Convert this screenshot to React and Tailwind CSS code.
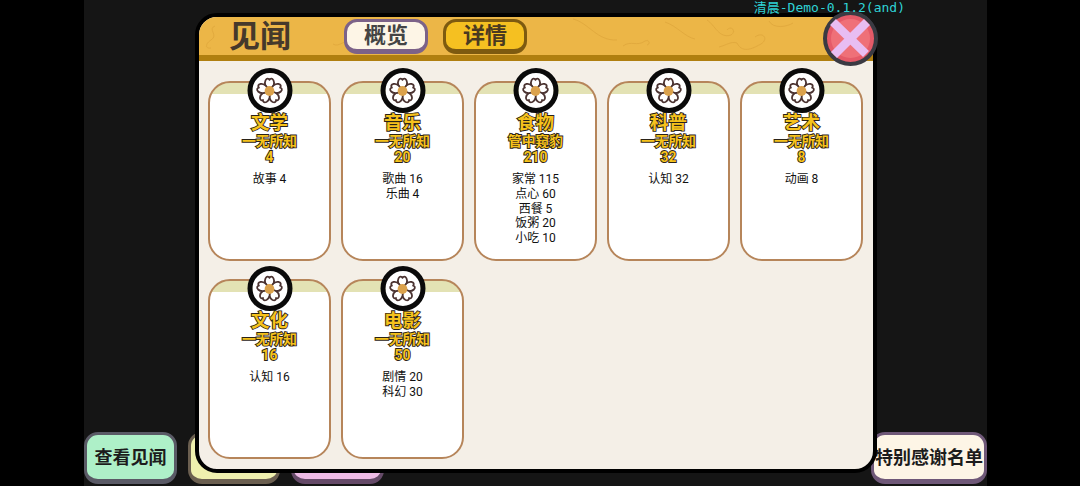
import React from 'react';

const cjk = "font-['Roboto','Noto_Sans_CJK_SC',sans-serif]";

const categories = [
  { name: '文学', rank: '一无所知', total: 4, items: ['故事 4'] },
  { name: '音乐', rank: '一无所知', total: 20, items: ['歌曲 16', '乐曲 4'] },
  { name: '食物', rank: '管中窥豹', total: 210, items: ['家常 115', '点心 60', '西餐 5', '饭粥 20', '小吃 10'] },
  { name: '科普', rank: '一无所知', total: 32, items: ['认知 32'] },
  { name: '艺术', rank: '一无所知', total: 8, items: ['动画 8'] },
  { name: '文化', rank: '一无所知', total: 16, items: ['认知 16'] },
  { name: '电影', rank: '一无所知', total: 50, items: ['剧情 20', '科幻 30'] },
];

function Flower() {
  const petals = [0, 72, 144, 216, 288];
  return (
    <svg viewBox="0 0 36 36" className="h-[32px] w-[32px]">
      {petals.map((r) => (
        <path
          key={r}
          d="M18 17C13 14 12 9 13.500 6C15 3.500 17 3.600 18 5.500C19 3.600 21 3.500 22.500 6C24 9 23 14 18 17Z"
          fill="#fff"
          stroke="#4a3230"
          strokeWidth="2"
          strokeLinejoin="round"
          transform={`rotate(${r} 18 18)`}
        />
      ))}
      <circle cx="18" cy="18" r="5.500" fill="#dba24c" />
    </svg>
  );
}

function OutlinedText({ className, children }) {
  return (
    <div className={`font-bold text-[#f6c21c] [-webkit-text-stroke:1.800px_#2a2218] [paint-order:stroke_fill] ${className}`}>
      {children}
    </div>
  );
}

function Card({ name, rank, total, items }) {
  return (
    <div className="relative flex h-[180px] flex-col items-center rounded-[22px] border-[2.500px] border-[#b6855a] bg-[linear-gradient(#e3e2b4_0,#e3e2b4_11px,#fff_11px)] pt-[29px]">
      {/* badge sits over the card top */}
      <div className="absolute left-1/2 top-[-15px] flex h-[45px] w-[45px] -translate-x-1/2 items-center justify-center rounded-full border-[5px] border-[#0a0a0a] bg-[radial-gradient(circle_at_50%_40%,#fff_70%,#e4e4e4)]">
        <Flower />
      </div>
      <OutlinedText className="text-[18.500px] leading-[22px]">{name}</OutlinedText>
      <OutlinedText className="text-[13.800px] leading-[15px]">{rank}</OutlinedText>
      <OutlinedText className="text-[13.800px] leading-[16px]">{total}</OutlinedText>
      <div className="mt-[7px] flex flex-col items-center text-[12px] leading-[14.750px] text-[#111]">
        {items.map((t) => (
          <div key={t}>{t}</div>
        ))}
      </div>
    </div>
  );
}

function Tab({ active, children }) {
  return (
    <div
      className={
        active
          ? 'flex h-[35px] w-[84px] items-center justify-center rounded-[13px] border-[3px] border-b-[5px] border-[#7d5a10] bg-[#f5c021] text-[22px] font-bold text-[#4a3a20]'
          : 'flex h-[35px] w-[84px] items-center justify-center rounded-[13px] border-[3px] border-b-[5px] border-[#7c6288] bg-[#fdf5e6] text-[22px] font-bold text-[#444]'
      }
    >
      {children}
    </div>
  );
}

function Swirls() {
  return (
    <svg viewBox="0 0 674 38" className="pointer-events-none absolute left-0 top-0 h-[38px] w-[674px]" fill="none" stroke="#e2aa3e" strokeWidth="1">
      <path d="M16 9C8 12 20 18 12 23C6 27 6 32 12 31" />
      <path d="M134 27C140 31 146 22 152 24" />
      <path d="M374 2C390 6 398 24 418 23" />
      <path d="M424 29C432 23 438 30 446 24C450 22 452 27 448 28" />
      <path d="M466 5C478 9 486 20 496 22" />
      <path d="M508 3C516 8 520 22 532 18C538 14 532 8 528 13" />
      <path d="M520 30C528 28 532 24 538 26C544 38 556 30 562 27C570 22 564 14 556 20" />
      <path d="M570 4C574 12 588 10 594 6" />
    </svg>
  );
}

function CloseButton() {
  return (
    <div className="absolute right-[-5px] top-[-6px] flex h-[55px] w-[55px] items-center justify-center rounded-full border-[4px] border-[#3a3a42] bg-[#e55a68]">
      <div className="absolute inset-[4px] rounded-full bg-[#ef7078]" />
      <svg viewBox="0 0 47 47" className="absolute inset-0 h-full w-full">
        <path d="M6 7L39 39M40 7L7 40" stroke="#e8bdf2" strokeWidth="8.500" />
      </svg>
    </div>
  );
}

function SideButton({ className, children }) {
  return (
    <div className={`flex h-[52px] items-center justify-center rounded-[14px] border-[3px] border-b-[5px] text-[18px] font-bold text-[#1c1c1c] ${className}`}>
      {children}
    </div>
  );
}

export default function App() {
  return (
    <div className={`relative h-[486px] w-[1080px] overflow-hidden bg-black ${cjk}`}>
      <div className="mx-[84px] flex h-full w-[903px] items-end gap-[11px] bg-[#151515] pb-[2px]">
        <SideButton className="w-[93px] border-[#5a5a66] bg-[#aef0c8]">查看见闻</SideButton>
        <SideButton className="w-[92px] border-[#6b5f50] bg-[#eff0ae]" />
        <SideButton className="w-[93px] border-[#654a68] bg-[#eebbe6]" />
        <SideButton className="ml-auto w-[116px] whitespace-nowrap border-[#6f5878] bg-[#fdf5e6]">特别感谢名单</SideButton>
      </div>

      {/* modal panel */}
      <div className="absolute left-[195px] top-[13px] h-[460px] w-[682px] rounded-[22px] border-4 border-black bg-[#f4efe7]">
        <div className="relative flex h-[44px] items-center rounded-t-[18px] border-b-[6px] border-[#b07f10] bg-[#ecb647]">
          <Swirls />
          <div className="relative ml-[30px] mr-[55px] w-[60px] whitespace-nowrap text-[31px] font-bold leading-none text-[#45392b]">见闻</div>
          <div className="relative flex gap-[15px]">
            <Tab>概览</Tab>
            <Tab active>详情</Tab>
          </div>
          <CloseButton />
        </div>
        <div className="grid grid-cols-[repeat(5,123px)] gap-x-[10px] gap-y-[18px] pl-[9px] pt-[20px]">
          {categories.map((c) => (
            <Card key={c.name} {...c} />
          ))}
        </div>
      </div>

      <div className="absolute right-[175px] top-[1px] font-['DejaVu_Sans_Mono','Noto_Sans_CJK_SC',monospace] text-[13px] leading-[14px] text-[#2fd3d6]">
        清晨-Demo-0.1.2(and)
      </div>
    </div>
  );
}
